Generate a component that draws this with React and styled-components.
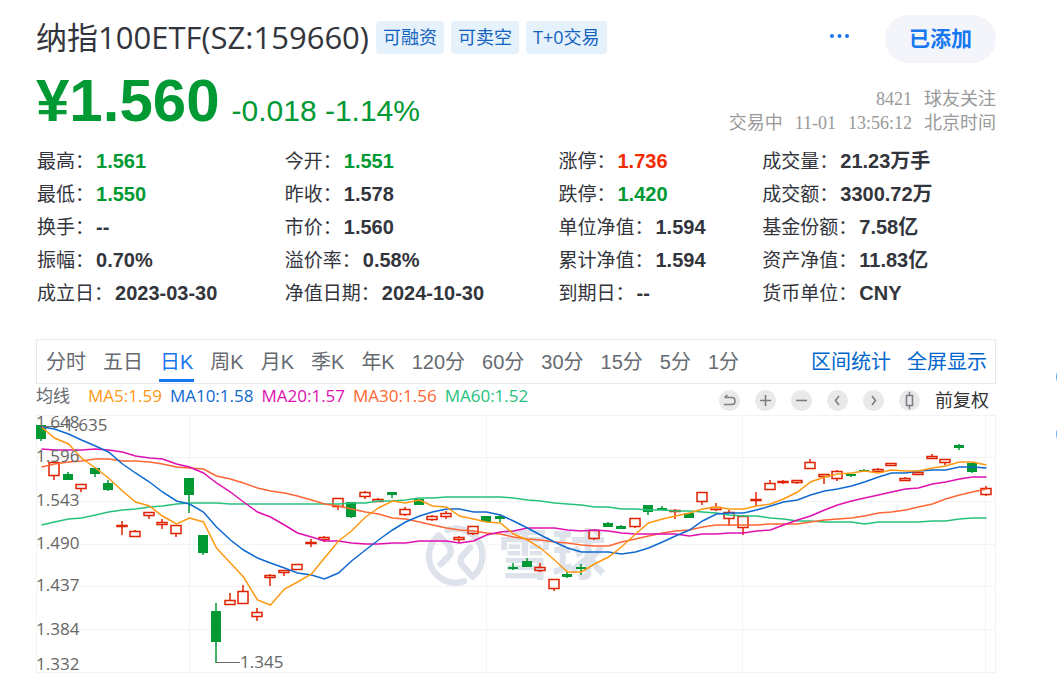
import React, { useState } from 'react';
import styled, { createGlobalStyle } from 'styled-components';

const Colors = {
  text: '#33353c',
  grey: '#666a70',
  rise: '#f22b00',
  fall: '#009933',
  link: '#0066cc',
  active: '#1677f0',
  border: '#e8e9ed',
};

const stats = [
  ['最高', '1.561', 'fall'],
  ['今开', '1.551', 'fall'],
  ['涨停', '1.736', 'rise'],
  ['成交量', '21.23万手'],
  ['最低', '1.550', 'fall'],
  ['昨收', '1.578'],
  ['跌停', '1.420', 'fall'],
  ['成交额', '3300.72万'],
  ['换手', '--'],
  ['市价', '1.560'],
  ['单位净值', '1.594'],
  ['基金份额', '7.58亿'],
  ['振幅', '0.70%'],
  ['溢价率', '0.58%'],
  ['累计净值', '1.594'],
  ['资产净值', '11.83亿'],
  ['成立日', '2023-03-30'],
  ['净值日期', '2024-10-30'],
  ['到期日', '--'],
  ['货币单位', 'CNY'],
];

const periods = ['分时', '五日', '日K', '周K', '月K', '季K', '年K', '120分', '60分', '30分', '15分', '5分', '1分'];

const averages = [
  {
    name: 'MA60',
    value: '1.52',
    color: '#26c17c',
    points: [
      111, 108, 105, 104, 101, 98, 96, 95, 93, 92, 90, 89, 89, 89, 90, 90, 90, 90, 90, 90, 90, 90, 90, 89,
      89, 87, 87, 86, 84, 84, 83, 83, 83, 83, 83, 84, 86, 87, 89, 90, 91, 93, 93, 95, 95, 96, 96, 97,
      97, 98, 99, 101, 102, 102, 104, 105, 107, 107, 108, 108, 108, 110, 108, 108, 108, 108, 107, 107, 105, 104, 104,
    ],
  },
  {
    name: 'MA30',
    value: '1.56',
    color: '#ff6633',
    points: [
      53, 50, 48, 47, 45, 45, 47, 47, 48, 50, 53, 54, 55, 62, 65, 69, 74, 77, 79, 82, 86, 90, 92, 95,
      98, 100, 104, 105, 108, 111, 114, 116, 117, 119, 120, 123, 125, 126, 128, 129, 131, 132, 132, 128, 125, 122, 119, 117,
      116, 113, 111, 111, 111, 111, 110, 110, 110, 108, 106, 105, 104, 102, 99, 98, 96, 93, 90, 85, 81, 78, 75,
    ],
  },
  {
    name: 'MA20',
    value: '1.57',
    color: '#e010b0',
    points: [
      35, 36, 36, 36, 35, 36, 38, 42, 44, 45, 50, 53, 59, 69, 78, 88, 98, 103, 111, 119, 123, 127, 127, 129,
      130, 130, 129, 129, 127, 127, 127, 129, 127, 121, 118, 117, 114, 114, 114, 116, 117, 116, 117, 119, 120, 120, 120, 120,
      122, 120, 120, 119, 119, 117, 116, 111, 106, 102, 96, 91, 87, 84, 81, 78, 75, 74, 70, 68, 65, 63, 63,
    ],
  },
  {
    name: 'MA10',
    value: '1.58',
    color: '#0f6ad0',
    points: [
      13, 15, 20, 26, 32, 38, 50, 59, 68, 78, 87, 90, 98, 113, 126, 136, 144, 149, 154, 159, 161, 165, 159, 147,
      136, 126, 116, 108, 102, 98, 95, 95, 98, 98, 101, 107, 114, 121, 128, 134, 138, 138, 138, 140, 138, 134, 128, 122,
      116, 107, 100, 99, 99, 96, 92, 88, 86, 81, 77, 75, 72, 68, 63, 59, 59, 57, 56, 56, 53, 53, 54,
    ],
  },
  {
    name: 'MA5',
    value: '1.59',
    color: '#ff9813',
    points: [
      13, 24, 30, 44, 54, 64, 77, 88, 92, 102, 110, 104, 108, 134, 149, 163, 186, 191, 175, 168, 160, 144, 127, 117,
      103, 94, 87, 89, 86, 92, 93, 102, 105, 108, 109, 120, 126, 134, 146, 158, 158, 150, 143, 133, 120, 109, 105, 102,
      99, 95, 93, 95, 95, 92, 90, 85, 78, 68, 63, 60, 59, 57, 59, 56, 57, 57, 54, 52, 48, 48, 51,
    ],
  },
];

// [direction, high, body top, body bottom, low]
const candles = [
  ['g', 11, 11, 25, 27], ['r', 48, 48, 61, 65], ['g', 58, 60, 66, 66], ['r', 70, 70, 74, 77],
  ['g', 53, 54, 60, 63], ['g', 66, 69, 76, 77], ['r', 107, 111, 112, 120], ['r', 116, 117, 122, 122],
  ['r', 98, 98, 101, 104], ['r', 105, 108, 110, 114], ['r', 111, 111, 119, 122], ['g', 64, 64, 81, 99],
  ['g', 121, 121, 139, 141], ['g', 189, 197, 228, 249], ['r', 179, 186, 190, 190], ['r', 171, 177, 189, 189],
  ['r', 194, 198, 202, 206], ['r', 160, 161, 163, 171], ['r', 156, 156, 158, 161], ['r', 150, 150, 155, 155],
  ['r', 125, 128, 129, 132], ['r', 122, 123, 125, 127], ['r', 84, 84, 92, 95], ['g', 88, 88, 103, 104],
  ['r', 77, 78, 82, 84], ['r', 84, 85, 87, 87], ['g', 78, 78, 81, 84], ['r', 93, 95, 100, 101],
  ['g', 85, 85, 91, 91], ['r', 101, 102, 105, 106], ['r', 97, 99, 102, 104], ['r', 122, 123, 125, 128],
  ['r', 112, 112, 119, 120], ['g', 102, 102, 108, 108], ['g', 101, 102, 105, 108], ['g', 149, 153, 155, 156],
  ['g', 144, 147, 153, 153], ['r', 149, 153, 156, 157], ['r', 165, 165, 174, 176], ['g', 158, 160, 163, 164],
  ['g', 150, 153, 155, 161], ['r', 116, 116, 124, 125], ['g', 108, 109, 113, 113], ['g', 111, 112, 115, 115],
  ['r', 104, 104, 112, 113], ['g', 91, 91, 98, 101], ['g', 92, 94, 96, 96], ['r', 95, 96, 97, 104],
  ['g', 99, 99, 104, 104], ['r', 78, 78, 87, 90], ['r', 89, 93, 95, 96], ['r', 96, 98, 104, 111],
  ['r', 101, 102, 113, 120], ['r', 78, 85, 86, 91], ['r', 66, 69, 75, 75], ['r', 66, 67, 68, 69],
  ['r', 66, 66, 68, 69], ['r', 45, 48, 54, 54], ['r', 60, 60, 62, 69], ['r', 56, 57, 64, 66],
  ['g', 60, 60, 62, 63], ['g', 55, 56, 58, 58], ['r', 54, 55, 57, 57], ['r', 49, 49, 51, 51],
  ['r', 63, 64, 66, 66], ['r', 58, 58, 60, 60], ['r', 40, 42, 44, 44], ['r', 45, 45, 48, 50],
  ['g', 30, 31, 34, 36], ['g', 49, 49, 58, 59], ['r', 72, 74, 80, 81],
];

const axis = [
  ['1.648', 14],
  ['1.596', 48],
  ['1.543', 92],
  ['1.490', 135],
  ['1.437', 177],
  ['1.384', 221],
  ['1.332', 256],
];

const candleX = (index) => Math.floor(5 + index * 13.5) + 0.5;

function Candle({ index, data }) {
  const [direction, high, top, bottom, low] = data;
  const x = candleX(index) - 0.5;
  if (direction === 'g') {
    return (
      <g fill={Colors.fall} stroke={Colors.fall} strokeWidth="1.5">
        <line x1={x} x2={x} y1={high} y2={low} />
        <rect x={x - 5} y={top} width="10" height={bottom - top} stroke="none" />
      </g>
    );
  }
  return (
    <g fill="none" stroke="#e02200" strokeWidth="1.5">
      <line x1={x} x2={x} y1={high} y2={top} />
      <line x1={x} x2={x} y1={bottom} y2={low + 1} />
      <rect x={x - 5} y={top + 0.5} width="10" height={bottom - top} />
    </g>
  );
}

function KChart() {
  return (
    <ChartSvg viewBox="0 0 960 260" role="img" aria-label="日K">
      <g stroke="#f3f3f3">
        {[1.5, 43.5, 87.5, 130.5, 172.5, 215.5, 258.5].map((y) => (
          <line key={y} x1="0" x2="960" y1={y} y2={y} />
        ))}
        {[0.5, 153.5, 450.5, 706.5, 949.5, 959.5].map((x) => (
          <line key={x} x1={x} x2={x} y1="1" y2="259" />
        ))}
      </g>
      <g transform="translate(364 46) scale(0.3333)" fill="none" stroke="#dde2eb" strokeWidth="19" strokeLinecap="round" strokeLinejoin="round">
        <path d="M192 364 A80 80 0 0 1 87 288 A80 80 0 0 1 116 226 L146 256 Q158 272 147 288 L122 313" />
        <path d="M142 210 A80 80 0 0 1 247 288 A80 80 0 0 1 218 350 L187 316 Q176 302 187 288 L210 263" />
      </g>
      <Watermark x="462" y="161">雪球</Watermark>
      {candles.map((data, index) => (
        <Candle key={index} index={index} data={data} />
      ))}
      {averages.map(({ name, color, points }) => (
        <polyline
          key={name}
          points={points.map((y, index) => `${candleX(index)},${y}`).join(' ')}
          fill="none"
          stroke={color}
          strokeWidth="1.5"
        />
      ))}
      <path d="M5 12.5 H28 M180 248.5 H204" stroke="#666" fill="none" />
      {axis.map(([label, y]) => (
        <AxisText key={label} x="0" y={y}>{label}</AxisText>
      ))}
      <AxisText x="28" y="17">1.635</AxisText>
      <AxisText x="204" y="254">1.345</AxisText>
    </ChartSvg>
  );
}

const tools = [
  ['撤销', 'M6 7.5 H13 Q16 7.5 16 11 Q16 14.5 13 14.5 H5 M8.5 5 L5.5 7.5'],
  ['放大', 'M5 10.5 H16 M10.5 5 V16'],
  ['缩小', 'M5 10.5 H16'],
  ['向左', 'M12 6 L8.5 10.5 L12 15'],
  ['向右', 'M9 6 L12.5 10.5 L9 15'],
  ['K线样式', 'M7.5 5.5 H13.5 V15.5 H7.5 Z M10.5 2 V5.5 M10.5 15.5 V19'],
];

export default function App() {
  const [period, setPeriod] = useState('日K');

  return (
    <Page>
      <GlobalStyle />
      <Main>
        <Header>
          <div>
            <TitleRow>
              <Title>纳指100ETF(SZ:159660)</Title>
              <Tag href="#margin">可融资</Tag>
              <Tag href="#short">可卖空</Tag>
              <Tag href="#t0">T+0交易</Tag>
            </TitleRow>
            <PriceRow>
              <Price>¥1.560</Price>
              <Change>-0.018 -1.14%</Change>
            </PriceRow>
          </div>
          <Side>
            <Actions>
              <MoreButton aria-label="更多">
                <svg width="20" height="6" viewBox="0 0 20 6" fill={Colors.active}>
                  <circle cx="3" cy="3" r="2" />
                  <circle cx="10.5" cy="3" r="2" />
                  <circle cx="18" cy="3" r="2" />
                </svg>
              </MoreButton>
              <AddedButton>已添加</AddedButton>
            </Actions>
            <Meta>
              <span>8421</span>
              <span>球友关注</span>
            </Meta>
            <Meta>
              <span>交易中</span>
              <span>11-01</span>
              <span>13:56:12</span>
              <span>北京时间</span>
            </Meta>
          </Side>
        </Header>

        <Stats>
          {stats.map(([label, value, trend]) => (
            <Stat key={label}>
              <dt>{label}：</dt>
              <StatValue $trend={trend}>{value}</StatValue>
            </Stat>
          ))}
        </Stats>

        <TabBar>
          <Tabs>
            {periods.map((name) => (
              <Tab key={name} $active={name === period} onClick={() => setPeriod(name)}>
                {name}
              </Tab>
            ))}
          </Tabs>
          <Links>
            <a href="#range">区间统计</a>
            <a href="#fullscreen">全屏显示</a>
          </Links>
        </TabBar>

        <ChartHead>
          <Legend>
            <LegendTitle>均线</LegendTitle>
            {[...averages].reverse().map(({ name, value, color }) => (
              <LegendItem key={name} $color={color}>
                {name}:{value}
              </LegendItem>
            ))}
          </Legend>
          <Tools>
            {tools.map(([name, d]) => (
              <ToolButton key={name} aria-label={name}>
                <svg width="21" height="21" viewBox="0 0 21 21" fill="none" stroke="#7b7f84" strokeWidth="1.6">
                  <path d={d} />
                </svg>
              </ToolButton>
            ))}
            <AdjustButton>前复权</AdjustButton>
          </Tools>
        </ChartHead>
        <KChart />
      </Main>
      <Aside>
        <Dot />
        <Dot />
      </Aside>
    </Page>
  );
}

const GlobalStyle = createGlobalStyle`
  * {
    box-sizing: border-box;
  }

  body {
    margin: 0;
    background: #fff;
    color: ${Colors.text};
    font-family: 'Liberation Sans', 'Noto Sans CJK SC', sans-serif;
    overflow: hidden;
  }

  button {
    padding: 0;
    border: 0;
    background: none;
    font-family: inherit;
    cursor: pointer;
  }

  a {
    text-decoration: none;
  }
`;

const Page = styled.div`
  display: flex;
`;

const Main = styled.main`
  flex: 1;
  min-width: 0;
  padding: 15px 60px 0 36px;
`;

const Aside = styled.aside`
  display: flex;
  flex-direction: column;
  flex: 0 0 1px;
  gap: 37px;
  padding-top: 367px;
  overflow: hidden;
`;

const Dot = styled.span`
  flex: none;
  width: 20px;
  height: 20px;
  border-radius: 50%;
  background: #66a9f2;
`;

const Header = styled.header`
  display: flex;
  justify-content: space-between;
`;

const TitleRow = styled.div`
  display: flex;
  align-items: center;
  gap: 7px;
  height: 44px;
`;

const Title = styled.h1`
  margin: 0;
  font: 400 31px/44px 'Open Sans', 'Noto Sans CJK SC', sans-serif;
  white-space: nowrap;
`;

const Tag = styled.a`
  padding: 0 7px;
  border-radius: 4px;
  background: #e5f1fb;
  color: #1463c0;
  font: 400 18px/33px 'Open Sans', 'Noto Sans CJK SC', sans-serif;
  white-space: nowrap;
`;

const PriceRow = styled.div`
  display: flex;
  align-items: baseline;
  gap: 12px;
  margin-top: 6px;
  color: ${Colors.fall};
`;

const Price = styled.strong`
  font-size: 60px;
  line-height: 72px;
`;

const Change = styled.span`
  font-size: 30px;
`;

const Side = styled.div`
  display: flex;
  flex-direction: column;
  align-items: flex-end;
`;

const Actions = styled.div`
  display: flex;
  align-items: center;
  gap: 36px;
  margin-bottom: 24px;
`;

const MoreButton = styled.button`
  display: flex;
  padding-bottom: 6px;
`;

const AddedButton = styled.button`
  height: 48px;
  padding: 0 24px 4px;
  border-radius: 24px;
  background: #f3f5fa;
  color: ${Colors.active};
  font-size: 21px;
  font-weight: 700;
`;

const Meta = styled.div`
  display: flex;
  gap: 12px;
  color: #999;
  font: 400 18px/24px 'Liberation Serif', 'Noto Sans CJK SC', serif;
`;

const Stats = styled.dl`
  display: grid;
  grid-template-columns: 248fr 274fr 204fr 234fr;
  margin: 8px 0 29px;
  padding-left: 1px;
`;

const Stat = styled.div`
  display: flex;
  gap: 2px;
  font-size: 19px;
  line-height: 33px;
  white-space: nowrap;
`;

const StatValue = styled.dd`
  margin: 0;
  color: ${(props) => Colors[props.$trend] || Colors.text};
  font-size: 20px;
  font-weight: 700;
`;

const TabBar = styled.div`
  display: flex;
  justify-content: space-between;
  height: 45px;
  padding: 0 8px;
  border: 1px solid ${Colors.border};
`;

const Tabs = styled.nav`
  display: flex;
  gap: 15px;
`;

const Tab = styled.button`
  height: 42px;
  padding: 5px 1px 0;
  border-bottom: 3px solid ${(props) => (props.$active ? Colors.active : 'transparent')};
  color: ${(props) => (props.$active ? Colors.active : Colors.grey)};
  font-size: 20px;
  line-height: 34px;
  white-space: nowrap;
`;

const Links = styled.div`
  display: flex;
  gap: 16px;
  font-size: 20px;
  line-height: 45px;

  a {
    color: ${Colors.link};
  }
`;

const ChartHead = styled.div`
  display: flex;
  justify-content: space-between;
  height: 30px;
`;

const Legend = styled.div`
  display: flex;
  gap: 8px;
  font: 400 17px/24px 'Open Sans', 'Noto Sans CJK SC', sans-serif;
`;

const LegendTitle = styled.span`
  margin-right: 10px;
  color: ${Colors.grey};
`;

const LegendItem = styled.span`
  color: ${(props) => props.$color};
`;

const Tools = styled.div`
  display: flex;
  align-items: center;
  gap: 15px;
  padding: 3px 7px 0 0;
`;

const ToolButton = styled.button`
  display: flex;
  border-radius: 50%;
  background: #e9e9e9;
`;

const AdjustButton = styled.button`
  color: #333;
  font-size: 18px;
  line-height: 24px;
`;

const ChartSvg = styled.svg`
  display: block;
  width: 100%;
  overflow: visible;
`;

const Watermark = styled.text`
  fill: #dde2eb;
  font: 700 54px 'Noto Sans CJK SC', sans-serif;
`;

const AxisText = styled.text`
  fill: #666;
  font: 400 17px 'Open Sans', sans-serif;
`;
